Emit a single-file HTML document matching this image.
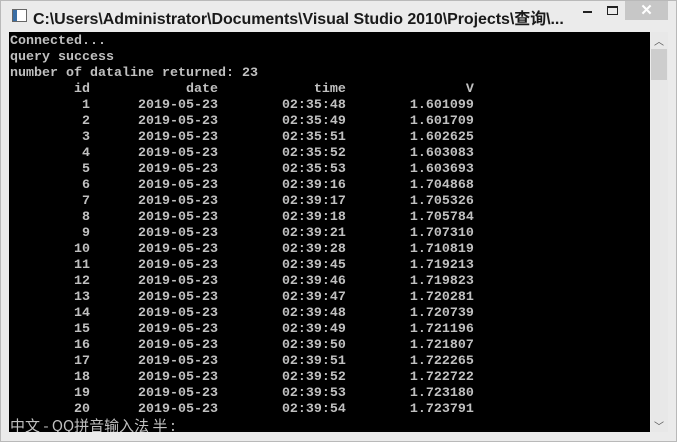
<!DOCTYPE html>
<html><head><meta charset="utf-8"><style>
body{margin:0;width:677px;height:442px;background:#ebebeb;position:relative;overflow:hidden;font-family:"Liberation Sans","Noto Sans CJK SC",sans-serif}
.frame{position:absolute;left:0;top:0;width:675px;height:440px;border:1px solid #b9b9b9;background:#ebebeb}
.title{position:absolute;left:33px;top:5px;font-size:16px;font-weight:bold;color:#1a1a1a;white-space:nowrap;letter-spacing:-0.05px}
.icon{position:absolute;left:12px;top:9px;width:13px;height:11px;border:1px solid #666;background:#fff}
.icon:before{content:"";position:absolute;left:0;top:0;width:4px;height:11px;background:#3a6ea5}
.close{position:absolute;left:625px;top:1px;width:43px;height:19px;background:#c7c7c7;color:#fff;font-size:15px;text-align:center;line-height:19px;font-weight:bold}
.min{position:absolute;left:583px;top:11px;width:9px;height:2px;background:#222}
.max{position:absolute;left:607px;top:6px;width:9px;height:6px;border:1px solid #222;border-top-width:2px}
.con{position:absolute;left:9px;top:32px;width:641px;height:400px;background:#000;overflow:hidden}
pre{margin:0;padding:2px 0 0 1px;font-family:"Liberation Mono","Noto Sans CJK SC",monospace;font-size:13.33px;line-height:16px;color:#c0c0c0;font-weight:bold}
.sb{position:absolute;left:651px;top:32px;width:17px;height:400px;background:#e8e8e8}
.thumb{position:absolute;left:651px;top:49px;width:16px;height:31px;background:#cdcdcd}
.up{position:absolute;left:654px;top:33px;font-size:10px;color:#555}
.dn{position:absolute;left:654px;top:418px;font-size:10px;color:#555}
</style></head><body>
<div class="frame"></div>
<div class="icon"></div>
<div class="title">C:\Users\Administrator\Documents\Visual Studio 2010\Projects\查询\...</div>
<div class="min"></div><div class="max"></div>
<div class="close">✕</div>
<div class="con"><pre>Connected...
query success
number of dataline returned: 23
        id            date            time               V
         1      2019-05-23        02:35:48        1.601099
         2      2019-05-23        02:35:49        1.601709
         3      2019-05-23        02:35:51        1.602625
         4      2019-05-23        02:35:52        1.603083
         5      2019-05-23        02:35:53        1.603693
         6      2019-05-23        02:39:16        1.704868
         7      2019-05-23        02:39:17        1.705326
         8      2019-05-23        02:39:18        1.705784
         9      2019-05-23        02:39:21        1.707310
        10      2019-05-23        02:39:28        1.710819
        11      2019-05-23        02:39:45        1.719213
        12      2019-05-23        02:39:46        1.719823
        13      2019-05-23        02:39:47        1.720281
        14      2019-05-23        02:39:48        1.720739
        15      2019-05-23        02:39:49        1.721196
        16      2019-05-23        02:39:50        1.721807
        17      2019-05-23        02:39:51        1.722265
        18      2019-05-23        02:39:52        1.722722
        19      2019-05-23        02:39:53        1.723180
        20      2019-05-23        02:39:54        1.723791
<span style="font-weight:normal;font-family:'Noto Sans CJK SC',sans-serif;font-size:15px">中文 - QQ拼音输入法 半 :</span></pre></div>
<div class="sb"></div><div class="thumb"></div>
<div class="up">︿</div><div class="dn">﹀</div>
</body></html>
